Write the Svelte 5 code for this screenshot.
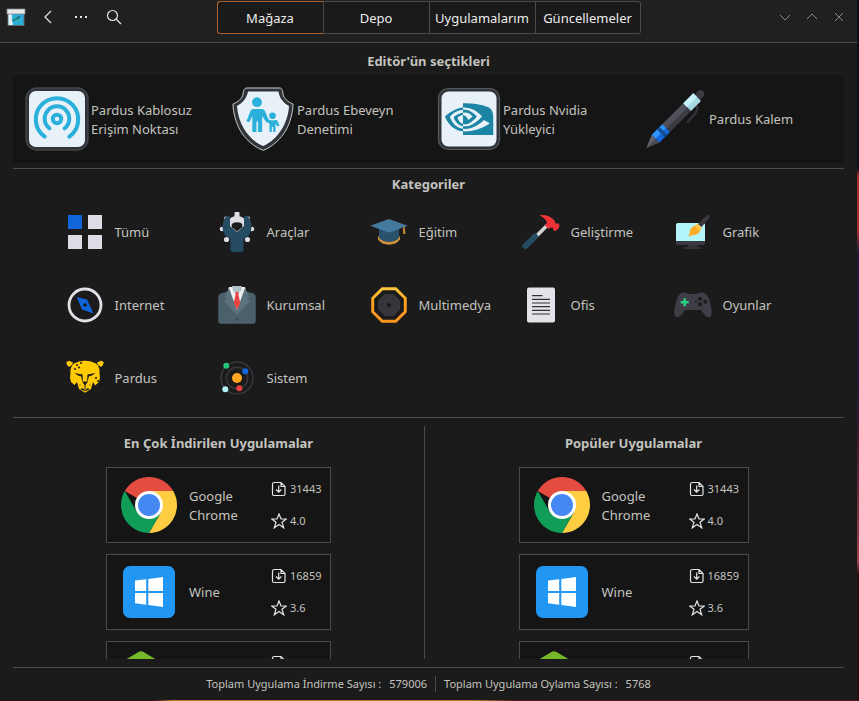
<script>
  const tabs = ['Mağaza', 'Depo', 'Uygulamalarım', 'Güncellemeler'];
  let active = $state('Mağaza');

  const featured = [
    { id: 'hotspot', name: 'Pardus Kablosuz Erişim Noktası' },
    { id: 'parental', name: 'Pardus Ebeveyn Denetimi' },
    { id: 'nvidia', name: 'Pardus Nvidia Yükleyici' },
    { id: 'pen', name: 'Pardus Kalem' }
  ];

  const categories = [
    { id: 'all', name: 'Tümü' },
    { id: 'tools', name: 'Araçlar' },
    { id: 'education', name: 'Eğitim' },
    { id: 'development', name: 'Geliştirme' },
    { id: 'graphics', name: 'Grafik' },
    { id: 'internet', name: 'Internet' },
    { id: 'corporate', name: 'Kurumsal' },
    { id: 'multimedia', name: 'Multimedya' },
    { id: 'office', name: 'Ofis' },
    { id: 'games', name: 'Oyunlar' },
    { id: 'pardus', name: 'Pardus' },
    { id: 'system', name: 'Sistem' }
  ];

  const apps = [
    { id: 'chrome', name: 'Google Chrome', downloads: '31443', rating: '4.0' },
    { id: 'wine', name: 'Wine', downloads: '16859', rating: '3.6' },
    { id: 'green', name: '', downloads: '', rating: '' }
  ];

  const lists = [
    { title: 'En Çok İndirilen Uygulamalar', kind: 'downloads' },
    { title: 'Popüler Uygulamalar', kind: 'popular' }
  ];
</script>

{#snippet featuredIcon(id)}
  <svg width="64" height="64" viewBox="0 0 64 64" aria-hidden="true">
    {#if id === 'hotspot'}
      <rect x="1" y="1" width="62" height="62" rx="11" fill="#303438" stroke="#42464a" stroke-width="1.4" />
      <rect x="4" y="4" width="56" height="56" rx="7" fill="#e9f1f8" />
      <g fill="none" stroke="#2bb0dc" stroke-width="4" stroke-linecap="round">
        <circle cx="32" cy="32" r="4.2" />
        <path d="M24.4 41.3A12.3 12.3 0 1 1 39.6 41.3" />
        <path d="M19.7 49.6A21.2 21.2 0 1 1 44.3 49.6" />
      </g>
    {:else if id === 'parental'}
      <path d="M16 1H49C51 1 51.600 4 52 7C53 12 57 15 62 17C62 25 59 36 55 43C50 52 41 60 32.300 63.300C23 60 14 52 9 43C5 36 2 25 2 17C7 15 11 12 12 7C12.400 4 13 1 16 1Z" fill="#303438" stroke="#c9ccce" stroke-width="1" />
      <path d="M17 4.500H47.500C48.200 11 52.500 16 58 19C57.600 27 55 35 51.500 41C46.500 49.500 39.500 56 32.300 59C24.500 56 17.500 49.500 12.500 41C9 35 6.500 27 6 19C11.500 16 16 11 17 4.500Z" fill="#e9f1f8" />
      <g fill="#2bb0dc">
        <circle cx="26" cy="15.200" r="4.900" />
        <path d="M22 22H31Q33 22 34 24L37.500 32.500L41 33.500L46 33L48.500 38.500L46.500 39.500L44.500 36.500V45H42.200V40H40.800V45H38.500V36.500L35 35L31.200 29V45H27V34.500H25.500V45H21.300V29L18.700 34.500Q17 36 15.500 34L19.500 24Q20.500 22 22 22Z" />
        <circle cx="41.500" cy="28.800" r="3.300" />
      </g>
    {:else if id === 'nvidia'}
      <rect x="1.500" y="1.500" width="61" height="61" rx="10" fill="#303438" stroke="#54595c" stroke-width="1.200" />
      <rect x="4.500" y="4.500" width="55" height="55" rx="7" fill="#e9f1f8" />
      <path transform="translate(8 8) scale(2.01)" fill="#1c85a5" d="M8.948 8.798v-1.430a6.700 6.700 0 0 1 .424-.018c3.922-.124 6.493 3.374 6.493 3.374s-2.774 3.851-5.750 3.851c-.398 0-.787-.062-1.158-.185v-4.346c1.528.185 1.837.857 2.747 2.385l2.040-1.714s-1.492-1.952-4-1.952a6.016 6.016 0 0 0-.796.035m0-4.735v2.138l.424-.027c5.450-.185 9.010 4.470 9.010 4.470s-4.080 4.964-8.330 4.964c-.370 0-.733-.035-1.095-.097v1.325c.3.035.610.062.910.062 3.957 0 6.820-2.023 9.593-4.408.459.371 2.340 1.263 2.730 1.652-2.633 2.208-8.772 3.984-12.253 3.984-.335 0-.653-.018-.971-.053v1.864H24V10.800C24 9 23.400 7 21.600 6.100C19 4.800 14 4.063 8.948 4.063zm0 10.326v1.131c-3.657-.654-4.673-4.460-4.673-4.460s1.758-1.944 4.673-2.262v1.237H8.940c-1.528-.186-2.730 1.245-2.730 1.245s.680 2.412 2.739 3.110M2.456 10.900s2.164-3.197 6.500-3.533V6.201C4.153 6.590 0 10.653 0 10.653s2.350 6.802 8.948 7.420v-1.237c-4.840-.6-6.492-5.936-6.492-5.936z" />
    {:else}
      <path d="M53.500 19C56 23 53 26 44 35.500" fill="none" stroke="#303036" stroke-width="2.600" />
      <path d="M52 8L54.500 4.500Q58 1.500 60.500 4.500Q62.500 7.500 59.500 10.500L56 13Z" fill="#3c3d42" />
      <path d="M19.300 37.300L40.300 16.300L48 24L27 45Z" fill="#3b3b44" />
      <path d="M19.300 37.300L40.300 16.300L44.500 20.500L23.500 41.500Z" fill="#50505b" />
      <path d="M40.300 16.300L50.300 6.300L58 14L48 24Z" fill="#a9d7e4" />
      <path d="M40.300 16.300L50.300 6.300L54 10L44 20Z" fill="#c5f1fb" />
      <path d="M8.700 48L19.300 37.300L27 45L16.300 55.700Z" fill="#1368df" />
      <path d="M8.700 48L19.300 37.300L23 41L12.500 51.800Z" fill="#2c95ff" />
      <path d="M14 42.500L16.500 40L24.300 47.700L21.800 50.200Z" fill="#164b91" />
      <path d="M3.500 61L8.700 48L16.300 55.700Z" fill="#4b4b53" />
      <path d="M3.500 61L8.700 48L12.500 51.800Z" fill="#62626b" />
    {/if}
  </svg>
{/snippet}

{#snippet categoryIcon(id)}
  <svg width="40" height="40" viewBox="0 0 40 40" aria-hidden="true">
    {#if id === 'all'}
      <path d="M3 3H17V17H3Z" fill="#1065d8" />
      <path d="M23 3H37V17H23ZM3 23H17V37H3ZM23 23H37V37H23Z" fill="#dedce4" />
    {:else if id === 'tools'}
      <g fill="#dedce4">
        <circle cx="20" cy="15" r="11" />
        <rect x="17.500" y="-1" width="5" height="9" rx="2.500" />
        <circle cx="5" cy="17" r="2.300" />
        <circle cx="35" cy="17" r="2.300" />
        <circle cx="9.500" cy="27.500" r="2.600" />
        <circle cx="30.500" cy="27.500" r="2.600" />
        <circle cx="9" cy="6.500" r="2" />
        <circle cx="31" cy="6.500" r="2" />
      </g>
      <path d="M10.500 3.500Q5.500 7 5.500 15.500Q6 24 13.500 27V37Q13.500 40 16.500 40H23.500Q26.500 40 26.500 37V27Q34 24 34.500 15.500Q34.500 7 29.500 3.500Q26.800 3.500 27 7V14L20 20L13 14V7Q13.200 3.500 10.500 3.500Z" fill="#254c62" />
      <path d="M14.500 13Q15 10.500 20 10.200Q25 10.500 25.500 13L25 15.200L20 19.500L15 15.200Z" fill="#1b1b1b" />
    {:else if id === 'education'}
      <path d="M9 24L14 28H26L31 24V27.500Q27 32.700 20 32.700Q13 32.700 9 27.500Z" fill="#d1923a" />
      <path d="M10 16H30V26Q26 30 20 30Q14 30 10 26Z" fill="#2a526c" />
      <path d="M20 7L38.700 13.700L20 20.700L1.300 13.700Z" fill="#43799c" />
      <path d="M34.500 15L36 14.500V17L36.500 22H34V17Z" fill="#bd8034" />
    {:else if id === 'development'}
      <path d="M13 26.500L26 13.500" stroke="#d5d5d7" stroke-width="3.500" />
      <path d="M4.500 34L14 24.500" stroke="#254c62" stroke-width="6" stroke-linecap="round" />
      <path d="M18.500 3.300Q27 2 33.500 8.500L35 12L37 11Q39.500 13 37.500 16.500L34.500 19Q31.500 18.500 32 16L29.500 15.500L27.500 17L24 13.500L26 10.500Q24 6 18.500 3.300Z" fill="#ed3336" />
    {:else if id === 'graphics'}
      <path d="M15 32H25V35H27Q29 35 29 37H11Q11 35 13 35H15Z" fill="#303036" />
      <rect x="3" y="11" width="29" height="22" rx="2" fill="#3a3a42" />
      <path d="M5 11H30Q32 11 32 13V29H3V13Q3 11 5 11Z" fill="#b4f5fb" />
      <path d="M15 24.500Q17 22 17 18Q19 14 24.500 12.500L28 16Q27 21.500 22 23Q18 23 15 24.500Z" fill="#ffad24" />
      <path d="M22 14L24.500 11.500L29 16L26 18.500Z" fill="#ffc94b" />
      <path d="M25 12L32.500 4.500Q36 1.500 36.500 3.500Q37 5 35 7.500L28.500 15Z" fill="#39393f" />
    {:else if id === 'internet'}
      <circle cx="20" cy="20" r="16" fill="none" stroke="#e2e0e7" stroke-width="2.800" />
      <path d="M11.700 12L22 14.500L28.500 28.500L17 24.500Z" fill="#1065d8" />
      <circle cx="20" cy="20" r="1.800" fill="#1b1b1b" />
    {:else if id === 'corporate'}
      <path d="M12 6L3.500 8.500Q1.300 9.500 1.300 12V36Q1.300 38.700 4 38.700H36Q38.700 38.700 38.700 36V12Q38.700 9.500 36.500 8.500L28 6Z" fill="#4c606b" />
      <path d="M12 2L28 2L30 9L20 27L10 9Z" fill="#eceff1" />
      <path d="M15 1H25L24 6L20 8L16 6Z" fill="#aebfc6" />
      <path d="M12 3L20 25V30L7 16L10 14L8 12Z" fill="#5c737f" />
      <path d="M28 3L20 25V30L33 16L30 14L32 12Z" fill="#5c737f" />
      <path d="M18.200 7H21.800L21.500 10L23.300 18L20 24.500L16.700 18L18.500 10Z" fill="#e84542" />
      <circle cx="20" cy="34.500" r="1" fill="#2e3d45" />
    {:else if id === 'multimedia'}
      <defs>
        <linearGradient id="speaker" x1="0" y1="0" x2="0" y2="1">
          <stop offset="0" stop-color="#ffc83b" />
          <stop offset="0.400" stop-color="#ffa31e" />
          <stop offset="1" stop-color="#ff951c" />
        </linearGradient>
      </defs>
      <path d="M13.300 3.700H26.700L36.300 13.300V26.700L26.700 36.300H13.300L3.700 26.700V13.300Z" fill="none" stroke="url(#speaker)" stroke-width="2.900" />
      <path d="M15.500 9H24.500L31 15.500V24.500L24.500 31H15.500L9 24.500V15.500Z" fill="#35353b" />
      <circle cx="20" cy="20" r="2" fill="#18181b" />
    {:else if id === 'office'}
      <rect x="6" y="2.500" width="28" height="35" rx="2" fill="#e4e3e9" />
      <path d="M11 10.700H21.500M11 14.300H29M11 18H29M11 21.700H29M11 25.300H29M11 29H29" stroke="#303035" stroke-width="1.200" />
    {:else if id === 'games'}
      <path d="M11 7.500Q14 7.500 16 9H24Q26 7.500 29 7.500Q34 7.500 36 14Q39.500 25 38.500 30Q37.500 33 34.500 32Q32 31 28 25H12Q8 31 5.500 32Q2.500 33 1.500 30Q.5 25 4 14Q6 7.500 11 7.500Z" fill="#3e3e46" />
      <path d="M11.700 13.300V21.300M7.700 17.300H15.700" stroke="#2bd181" stroke-width="2.400" />
      <g fill="#1b1b1e">
        <circle cx="27" cy="13.700" r="2" />
        <circle cx="32.300" cy="16.700" r="2" />
        <circle cx="27" cy="19.300" r="2" />
        <circle cx="23" cy="16.700" r="1" />
      </g>
    {:else if id === 'pardus'}
      <g fill="#ffcb05">
        <path d="M1.300 4L4 2.700L8 4.500L7 7L4 9L2 7ZM38.700 4L36 2.700L32 4.500L33 7L36 9L38 7Z" />
        <path d="M9 5.500Q14 2.500 20 2.700Q26 2.500 31 5.500Q35 9 34.500 14Q35.500 20 34 24L30 27.500L28 24L26 31L20 34.700L14 31L12 24L9.500 27L6 24Q4.500 20 5.500 14Q5 9 9 5.500Z" />
      </g>
      <g fill="#1b1b1b">
        <path d="M9.500 15L17.500 16.500L18 24L17 22L16 18.200L13 17.500ZM30.500 15L22.500 16.500L22 24L23 22L24 18.200L27 17.500Z" />
        <path d="M17 23.500H23L20.500 27V31H19.500V27Z" />
        <path d="M15.500 31.500L17 30L20 32L23 30L24.500 31.500L20 33Z" />
        <circle cx="12" cy="7" r="1" /><circle cx="16" cy="5" r="1" />
        <circle cx="14" cy="9.500" r="1" /><circle cx="10" cy="11" r="1" />
        <circle cx="31" cy="20" r="1" /><circle cx="33" cy="23" r="1" />
        <circle cx="15" cy="27" r=".6" /><circle cx="25" cy="27" r=".6" />
      </g>
    {:else}
      <circle cx="20" cy="20" r="16" fill="none" stroke="#37373d" stroke-width="1.500" />
      <circle cx="20" cy="20" r="10.700" fill="none" stroke="#37373d" stroke-width="1.500" />
      <circle cx="20" cy="20" r="5" fill="#ffa51f" />
      <circle cx="9.300" cy="7.700" r="3" fill="#23c67a" />
      <circle cx="28.300" cy="13.300" r="3" fill="#1368df" />
      <circle cx="8.300" cy="31.300" r="3" fill="#b4f5fb" />
      <circle cx="22.300" cy="30.300" r="3" fill="#ed3f3e" />
    {/if}
  </svg>
{/snippet}

{#snippet appIcon(id)}
  <svg width="64" height="64" viewBox="0 0 64 64" aria-hidden="true">
    {#if id === 'chrome'}
      <path d="M32 32L7.750 18A28 28 0 0 1 56.250 18Z" fill="#e34c3e" />
      <path d="M32 18H56.250A28 28 0 0 1 32 60L44.120 39Z" fill="#ffcd41" />
      <path d="M7.750 18A28 28 0 0 0 32 60L44.120 39L32 44L19.880 39Z" fill="#109d58" />
      <circle cx="32" cy="32" r="14" fill="#fff" />
      <circle cx="32" cy="32" r="11" fill="#4587f3" />
    {:else if id === 'wine'}
      <rect x="6" y="6" width="52" height="52" rx="7" fill="#2196f3" />
      <path d="M18 20.500L29.200 19.200V31H18ZM31.300 18.900L46 17V31H31.300ZM18 33H29.200V44.800L18 43.300ZM31.300 33H46V47L31.300 45Z" fill="#fff" />
    {:else}
      <path d="M8 13L21.500 5Q24 3.500 26.500 5L40 13V34L24 44L8 34Z" fill="#77b82a" />
    {/if}
  </svg>
{/snippet}

<div class="desktop">
  <main class="window">
    <header>
      <div class="left">
        <svg class="logo" width="20" height="20" viewBox="0 0 20 20" aria-hidden="true">
          <path d="M2 6H18V18.500H2Z" fill="#2bb0dc" stroke="#62686c" />
          <path d="M2.500 7H6Q5 12 7 18H2.500Z" fill="#e4eef3" />
          <path d="M1 2H19V7H1Z" fill="#e9e9ea" stroke="#85898b" stroke-width=".8" />
          <path d="M6 14L10 10L15 9L12 13L8 14Z" fill="#176b87" />
          <path d="M7 11H11M9 13H14" stroke="#3fc58c" />
        </svg>
        <button class="tool" aria-label="Geri">
          <svg width="16" height="16" viewBox="0 0 16 16"><path d="M11 2L5 8L11 14" /></svg>
        </button>
        <button class="tool" aria-label="Menü">
          <svg width="16" height="16" viewBox="0 0 16 16"><path class="dots" d="M2 7H4V9H2ZM7 7H9V9H7ZM12 7H14V9H12Z" /></svg>
        </button>
        <button class="tool" aria-label="Ara">
          <svg width="16" height="16" viewBox="0 0 16 16"><circle cx="6.500" cy="6.500" r="5" /><path d="M10 10L15 15" /></svg>
        </button>
      </div>
      <nav class="tabs">
        {#each tabs as tab}
          <button class:active={tab === active} onclick={() => (active = tab)}>{tab}</button>
        {/each}
      </nav>
      <div class="controls">
        <button aria-label="Küçült"><svg width="12" height="12" viewBox="0 0 12 12"><path d="M1 4L6 9L11 4" /></svg></button>
        <button aria-label="Büyüt"><svg width="12" height="12" viewBox="0 0 12 12"><path d="M1 8L6 3L11 8" /></svg></button>
        <button aria-label="Kapat"><svg width="12" height="12" viewBox="0 0 12 12"><path d="M2 2L10 10M10 2L2 10" /></svg></button>
      </div>
    </header>

    <div class="content">
      <section class="editors">
        <h2>Editör'ün seçtikleri</h2>
        <div class="featured">
          {#each featured as item}
            <button>
              {@render featuredIcon(item.id)}
              <span>{item.name}</span>
            </button>
          {/each}
        </div>
      </section>

      <section class="browse">
        <h2>Kategoriler</h2>
        <div class="categories">
          {#each categories as item}
            <button>
              {@render categoryIcon(item.id)}
              <span>{item.name}</span>
            </button>
          {/each}
        </div>
      </section>

      <div class="lists">
        {#each lists as list}
          <section class="list {list.kind}">
            <h2>{list.title}</h2>
            <div class="cards">
              {#each apps as app}
                <button class="card">
                  {@render appIcon(app.id)}
                  <span class="name">{app.name}</span>
                  <span class="stats">
                    <span class="stat">
                      <svg width="16" height="16" viewBox="0 0 16 16" aria-hidden="true">
                        <path d="M3.500 1.500H10L14 5.500V13Q14 14.500 12.500 14.500H3Q1.500 14.500 1.500 13V3Q1.500 1.500 3.500 1.500ZM10 1.500V5.500H14M7.700 4.500V11M5 8.500L7.700 11.200L10.400 8.500" />
                      </svg>
                      {app.downloads}
                    </span>
                    <span class="stat">
                      <svg width="16" height="16" viewBox="0 0 16 16" aria-hidden="true">
                        <path d="M8 1L10 6H15.300L11 9.300L12.700 14.800L8 11.500L3.300 14.800L5 9.300L.7 6H6Z" />
                      </svg>
                      {app.rating}
                    </span>
                  </span>
                </button>
              {/each}
            </div>
          </section>
        {/each}
      </div>

      <footer>
        <p><span>Toplam Uygulama İndirme Sayısı :</span><span>579006</span></p>
        <p><span>Toplam Uygulama Oylama Sayısı :</span><span>5768</span></p>
      </footer>
    </div>
  </main>
</div>

<style>
  :global(body) {
    background: #1b1b1b;
  }

  .desktop {
    box-sizing: border-box;
    height: 100vh;
    padding: 0 2px 1px 0;
    background:
      linear-gradient(90deg, #3a1216 0 18%, #c07a2a 20% 55%, #4a1a1c 60%) bottom / 100% 1px no-repeat,
      linear-gradient(#0d0d1c 0 24%, #a02c2c 25% 33%, #20183a 36% 55%, #3c1630 62%, #a04048 80%, #2a0c12 82%);
    font-family: 'Noto Sans', sans-serif;
    font-size: 13px;
    line-height: 19px;
    color: #c3c3bf;
  }

  .window {
    display: flex;
    flex-direction: column;
    height: 100%;
    background: #1b1b1b;
  }

  button {
    box-sizing: border-box;
    margin: 0;
    padding: 0;
    border: 0;
    background: none;
    color: inherit;
    font: inherit;
    text-align: left;
    cursor: pointer;
  }

  svg {
    display: block;
    flex: none;
  }

  header {
    display: grid;
    grid-template-columns: 1fr auto 1fr;
    align-items: start;
    flex: none;
    height: 42px;
    border-bottom: 1px solid #4a4c4b;
    background: #202020;
  }

  .left,
  .controls {
    display: flex;
    align-items: center;
    height: 34px;
  }

  .left {
    padding-left: 6px;
  }

  .logo {
    margin-right: 5px;
  }

  .tool {
    display: flex;
    align-items: center;
    justify-content: center;
    width: 33px;
    height: 32px;
  }

  .tool svg,
  .stat svg {
    fill: none;
    stroke: #e4e4e0;
    stroke-width: 1.2;
  }

  .tool .dots {
    fill: #e4e4e0;
    stroke: none;
  }

  .tabs {
    display: flex;
    margin-top: 1px;
  }

  .tabs button {
    width: 106px;
    height: 33px;
    padding-top: 2px;
    border: 1px solid #4a4c4b;
    border-left-width: 0;
    background: #1a1a1a;
    color: #ececea;
    text-align: center;
    white-space: nowrap;
  }

  .tabs button:first-child {
    width: 107px;
    border-left-width: 1px;
    border-radius: 3px 0 0 3px;
  }

  .tabs button:last-child {
    width: 105px;
    border-radius: 0 3px 3px 0;
  }

  .tabs .active {
    border-color: #b0622c #4a4c4b #b0622c #b0622c;
  }

  .controls {
    justify-content: flex-end;
    padding-right: 5px;
  }

  .controls button {
    display: flex;
    align-items: center;
    justify-content: center;
    width: 27px;
    height: 32px;
  }

  .controls svg {
    fill: none;
    stroke: #858585;
  }

  .content {
    display: flex;
    flex: 1;
    flex-direction: column;
    min-height: 0;
    padding: 0 13px;
  }

  h2 {
    margin: 0;
    font-size: 13px;
    font-weight: 700;
    line-height: 20px;
    text-align: center;
  }

  .editors {
    padding: 8px 0 5px;
    border-bottom: 1px solid #4a4c4b;
  }

  .featured {
    display: grid;
    grid-template-columns: repeat(4, 1fr);
    margin-top: 4px;
    padding: 0 4px 0 3px;
    background: #151515;
  }

  .featured button {
    display: flex;
    align-items: center;
    gap: 2px;
    height: 88px;
    padding-left: 9px;
  }

  .featured span {
    max-width: 112px;
    padding-top: 1px;
  }

  .browse {
    padding: 5px 0 2px;
    border-bottom: 1px solid #4a4c4b;
  }

  .categories {
    display: grid;
    grid-template-columns: repeat(5, 152px);
    justify-content: center;
    margin-top: 2px;
  }

  .categories button {
    display: flex;
    align-items: center;
    gap: 10px;
    height: 73px;
    padding: 0 0 1px 16px;
  }

  .categories span {
    padding-top: 1px;
  }

  .lists {
    display: grid;
    grid-template-columns: 412fr 419fr;
    flex: 1;
    min-height: 0;
    padding: 8px 0;
  }

  .list {
    display: flex;
    flex-direction: column;
    align-items: center;
    min-height: 0;
    padding-top: 7px;
  }

  .list.downloads {
    border-right: 1px solid #4a4c4b;
  }

  .list.popular {
    padding-right: 2px;
  }

  .cards {
    display: flex;
    flex: 1;
    flex-direction: column;
    gap: 11px;
    width: 225px;
    min-height: 0;
    margin-top: 14px;
    overflow-y: auto;
    scrollbar-width: none;
  }

  .popular .cards {
    width: 230px;
  }

  .card {
    display: flex;
    flex: none;
    align-items: center;
    gap: 8px;
    height: 76px;
    padding: 0 10px;
    border: 1px solid #4a4c4b;
    background: #151515;
  }

  .name {
    flex: 1;
    padding-top: 1px;
  }

  .stats {
    display: flex;
    flex-direction: column;
    gap: 16px;
    width: 49px;
    font-size: 11px;
    line-height: 16px;
  }

  .stat {
    display: flex;
    gap: 3px;
  }

  footer {
    display: flex;
    justify-content: center;
    flex: none;
    padding: 8px 0;
    border-top: 1px solid #4a4c4b;
    font-size: 11px;
    line-height: 16px;
  }

  footer p {
    display: flex;
    gap: 8px;
    margin: 0;
  }

  footer p + p {
    margin-left: 8px;
    padding-left: 8px;
    border-left: 1px solid #4a4c4b;
  }
</style>
